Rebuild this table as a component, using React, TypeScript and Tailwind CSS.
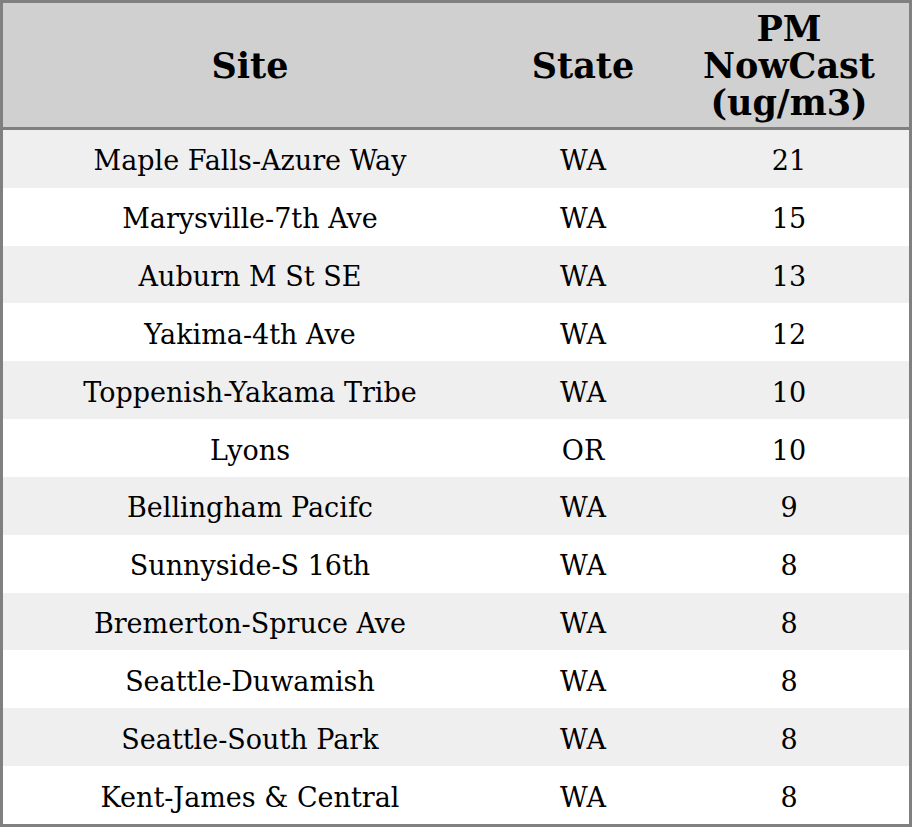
const rows: [string, string, string][] = [
  ["Maple Falls-Azure Way", "WA", "21"],
  ["Marysville-7th Ave", "WA", "15"],
  ["Auburn M St SE", "WA", "13"],
  ["Yakima-4th Ave", "WA", "12"],
  ["Toppenish-Yakama Tribe", "WA", "10"],
  ["Lyons", "OR", "10"],
  ["Bellingham Pacifc", "WA", "9"],
  ["Sunnyside-S 16th", "WA", "8"],
  ["Bremerton-Spruce Ave", "WA", "8"],
  ["Seattle-Duwamish", "WA", "8"],
  ["Seattle-South Park", "WA", "8"],
  ["Kent-James & Central", "WA", "8"],
];

export default function App() {
  return (
    <div className="w-[912px] h-[827px] bg-white font-['DejaVu_Serif',serif] text-black">
      <div className="w-full h-full border-[3px] border-[#808080] flex flex-col">
        <div className="h-[124px] shrink-0 bg-[#d0d0d0] grid grid-cols-[494px_172px_1fr] items-center text-center font-bold text-[35px] leading-[37px]">
          <div>Site</div>
          <div>State</div>
          <div>
            PM
            <br />
            NowCast
            <br />
            (ug/m3)
          </div>
        </div>
        <div className="h-[3px] shrink-0 bg-[#808080]" />
        <div className="flex-1 flex flex-col text-[27px] leading-[32px]">
          {rows.map(([site, state, pm], i) => (
            <div
              key={site}
              className={`flex-1 pt-[5px] grid grid-cols-[494px_172px_1fr] items-center text-center ${
                i % 2 === 0 ? "bg-[#efefef]" : "bg-white"
              }`}
            >
              <div>{site}</div>
              <div>{state}</div>
              <div>{pm}</div>
            </div>
          ))}
        </div>
      </div>
    </div>
  );
}
